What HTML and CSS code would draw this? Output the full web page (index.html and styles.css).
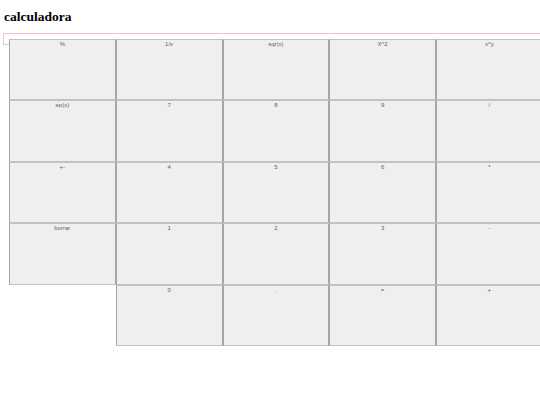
FILE: index.html
```html
<!DOCTYPE html>
<html lang="es">
<head>
<meta charset="utf-8">
<title>calculadora</title>
<link rel="stylesheet" href="styles.css">
</head>
<body>
<h1 class="title">calculadora</h1>
<div class="display"></div>
<div class="pad">
  <div class="keys">
    <button class="key">%</button>
    <button class="key">1/x</button>
    <button class="key">sqr(x)</button>
    <button class="key">X^2</button>
    <button class="key">x^y</button>
    <button class="key">ep(x)</button>
    <button class="key">7</button>
    <button class="key">8</button>
    <button class="key">9</button>
    <button class="key">/</button>
    <button class="key">+-</button>
    <button class="key">4</button>
    <button class="key">5</button>
    <button class="key">6</button>
    <button class="key">*</button>
    <button class="key">borrar</button>
    <button class="key">1</button>
    <button class="key">2</button>
    <button class="key">3</button>
    <button class="key">-</button>
    <button class="key zero">0</button>
    <button class="key">.</button>
    <button class="key">=</button>
    <button class="key">+</button>
  </div>
</div>
</body>
</html>
```

FILE: styles.css
```css
html, body {
  margin: 0;
  padding: 0;
  background: #ffffff;
}

.title {
  margin: 0;
  padding: 9px 0 0 4px;
  font-family: "Liberation Serif", "Times New Roman", serif;
  font-weight: bold;
  font-size: 13.5px;
  line-height: 16px;
  color: #000000;
}

.display {
  margin: 8px 0 0 3px;
  height: 10px;
  border: 1px solid #f2c4c4;
  border-right: none;
}

.pad {
  margin-top: -6px;
  overflow: hidden;
}

.keys {
  margin-left: 9px;
  display: grid;
  grid-template-columns: repeat(5, 106.75px);
  grid-auto-rows: 61.4px;
}

.key {
  margin: 0;
  padding: 1px 0 0 0;
  box-sizing: border-box;
  display: flex;
  justify-content: center;
  align-items: flex-start;
  background: #efefef;
  border-style: solid;
  border-width: 1px;
  border-color: #c2c2c2 #a6a6a6 #c2c2c2 #a6a6a6;
  font-family: "Liberation Sans", Arial, sans-serif;
  font-size: 6px;
  line-height: 7px;
  color: #5e5e5e;
}

.zero {
  grid-column-start: 2;
}
```
